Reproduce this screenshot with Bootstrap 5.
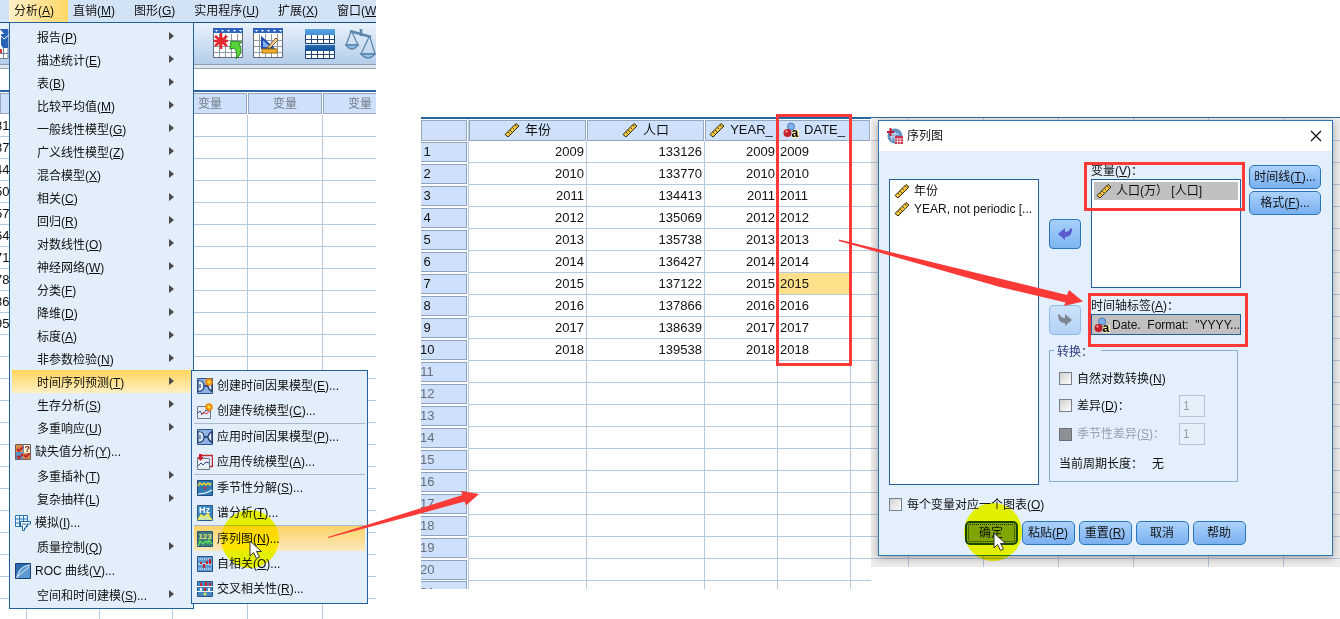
<!DOCTYPE html>
<html lang="zh-CN">
<head>
<meta charset="utf-8">
<meta name="viewport" content="width=device-width, initial-scale=1">
<title>序列图</title>
<link href="https://cdn.jsdelivr.net/npm/bootstrap@5.3.0/dist/css/bootstrap.min.css" rel="stylesheet">
<style>
  body { font: 12px/16px "Liberation Sans", "Noto Sans CJK SC", sans-serif; color: #111; background: #fff; }
  .stage { display: grid; grid-template-columns: 376fr 495fr 469fr; align-items: start; }
  .ico { width: 16px; height: 16px; flex: none; }
  a { color: inherit; text-decoration: none; }

  /* menu bar and toolbar */
  .menubar { background: #d3e3f6; border-bottom: 1px solid #1b4c84; height: 23px; padding-left: 9px; }
  .menubar .nav-link { color: #111; padding: 3px 14px 3px 5px; white-space: nowrap; }
  .menubar .nav-link.active { background: linear-gradient(90deg, #fff0c8, #ffd768); }
  .toolbar { height: 42px; background: linear-gradient(#e9f2fc, #b4cdea); border-bottom: 1px solid #8d9bab; padding: 5px 0 0 213px; gap: 9px; }
  .toolbar .btn { border: 0; padding: 0; line-height: 0; border-radius: 0; flex: none; }
  .toolbar svg { width: 31px; height: 31px; }
  .cut-icon { left: 0; top: 29px; width: 9px; height: 30px; }
  .editline { height: 27px; background: #fff; border-top: 3px solid #dde6f0; border-bottom: 2px solid #2a66a4; box-shadow: inset 0 1px #9aa5b1; }

  /* drop-down menus */
  .menu-panel { background: #e3eefb; border: 1px solid #22609e; border-radius: 0; padding: 2px; font-size: 12px; margin: 0; }
  .menu-main { left: 9px; top: 22px; width: 185px; min-width: 0; }
  .menu-sub { left: 100%; top: 0; width: 177px; min-width: 0; }
  .menu-panel .dropdown-item { display: flex; align-items: center; color: #111; height: 23px; padding: 2px 17px 0 25px; white-space: nowrap; }
  .menu-panel .dropdown-item.iconed { height: 25px; padding: 1px 3px 0; gap: 4px; }
  .menu-panel .hot { background: linear-gradient(#ffd55c, #fff0c4); }
  .menu-sub .hot { background: linear-gradient(#fdd368, #fbe9bc); }
  .menu-panel .more::after { content: ""; margin-left: auto; border-left: 5px solid #4a4a4a; border-top: 4px solid transparent; border-bottom: 4px solid transparent; margin-top: -4px; }
  .menu-panel .dropdown-divider { margin: 0; border-top: 1px solid #a9b9cb; opacity: 1; }

  /* data grids */
  .sheet { table-layout: fixed; border-collapse: separate; border-spacing: 0; font-size: 13px; line-height: 16px; margin: 0; }
  .sheet td { height: 22px; padding: 0 2px; border-right: 1px solid #b5c9e0; border-bottom: 1px solid #b5c9e0; text-align: right; }
  .sheet th { font-weight: 400; padding: 0; height: 22px; }
  .sheet .cap { height: 21px; display: flex; align-items: center; justify-content: center; gap: 5px; background: #cfe1fa; border: 1px solid #95a8c0; margin-right: 1px; white-space: nowrap; overflow: hidden; }
  .sheet .rowcap { height: 20px; background: #cfe1fa; border: 1px solid #8ca2bd; border-left: 0; margin: 0 1px 1px 0; overflow: hidden; }
  .sheet .rowcap span { display: block; width: 14px; margin-left: -1px; text-align: center; line-height: 18px; }
  .sheet .vacant { color: #666e78; }
  .left-sheet { width: 398px; }
  .left-sheet th { height: 23px; }
  .left-sheet .cap { color: #747c86; font-size: 12px; }
  .left-sheet td:first-child { text-align: left; padding-left: 0; }
  .left-sheet td:first-child span { margin-left: -5px; }
  .left-sheet tr:last-child td { height: 20px; border-bottom: 0; }
  .data-pane { padding: 117px 0 0 45px; }
  .data-sheet { width: 100%; border-top: 2px solid #2466a5; }
  .data-sheet th:first-child { border-right: 1px solid #b5c9e0; }
  .data-sheet td:last-child { border-right: 0; }
  .data-sheet .datecell { text-align: left; }
  .data-sheet .picked { background: #ffe08a; }
  .data-sheet tbody tr:last-child > * { height: 8px; border-bottom: 0; padding-top: 0; padding-bottom: 0; line-height: 0; }
  .data-sheet tbody tr:last-child .rowcap { height: 8px; border-bottom: 0; margin-bottom: 0; padding-top: 2px; }

  /* dialog */
  .backdrop-pane { margin-top: 117px; padding: 3px 7px 11px;
    background: linear-gradient(#35699c 0 1px, transparent 1px),
      repeating-linear-gradient(transparent 0 21px, #b3c3d8 21px 22px) 0 2px,
      repeating-linear-gradient(90deg, transparent 0 74px, #b3c3d8 74px 75px) -37px 0, #eeedec; }
  .dlg { background: #e3effc; border: 1px solid #2b77b5; box-shadow: 0 2px 8px rgba(0,0,0,.32); }
  .dlg-title { height: 30px; background: #fff; padding: 0 10px 0 8px; }
  .dlg-title .btn { padding: 0; border: 0; line-height: 0; }
  .dlg-body { padding: 12px 11px 10px 10px; }
  .columns { display: flex; gap: 10px; }
  .pickbox { background: #fff; border: 1px solid #22609e; border-radius: 0; overflow: hidden; }
  .pickbox .list-group-item { border: 0; background: none; color: #111; padding: 0 4px; height: 18px; display: flex; align-items: center; gap: 4px; white-space: nowrap; }
  .pickbox .chosen { background: #c0c0c0; }
  .source-list { margin-top: 16px; padding-top: 2px; flex: 1 1 150px; min-width: 0; }
  .targets { display: grid; grid-template-columns: 32px 150px 70px; column-gap: 10px; flex: none; }
  .targets .side { margin-left: -2px; width: 72px; display: flex; flex-direction: column; gap: 2px; padding-top: 2px; }
  .axis-field { padding-top: 10px; }
  .move-btn { width: 32px; height: 30px; padding: 0; border: 1px solid #2a76bd; border-radius: 4px; background: linear-gradient(#a7d0fb, #7db4f1); line-height: 0; }
  .move-btn:disabled { border-color: #8ebce8; background: linear-gradient(#cde2fa, #b3d2f6); opacity: 1; }
  .push { height: 24px; padding: 0; font-size: 12px; line-height: 16px; color: #111; border: 1px solid #2a76bd; border-radius: 5px; background: linear-gradient(#acd2fc, #79b0ef); white-space: nowrap; }
  .foot .push { width: 53px; }
  .foot .default { border: 2px solid #17446c; background: #7fa6d0; outline: 1px dotted #222; outline-offset: -4px; }
  .var-list { height: 109px; padding: 2px; }
  .var-list .list-group-item { padding: 0 2px; }
  .axis-box { height: 21px; }
  .axis-box .list-group-item { height: 19px; padding: 0 0 0 2px; gap: 2px; }
  .group { border: 1px solid #8aaccb; margin: 15px 3px 3px 0; height: 132px; grid-column: 1 / 3; position: relative; padding: 14px 9px 0; }
  .group legend { position: absolute; left: 4px; top: -7px; width: auto; padding: 0 8px 0 3px; margin: 0; background: #e3effc; font-size: 12px; line-height: 16px; color: #2c3c80; }
  .opt { display: flex; align-items: center; gap: 5px; height: 27px; }
  .opt.tall { height: 30px; }
  .opt.each { margin: 6px 0 3px; }
  .opt .form-check-input { width: 13px; height: 13px; margin: 0; border: 1px solid #76808c; border-radius: 0; background: linear-gradient(135deg, #cfcfcf, #fff); opacity: 1; flex: none; }
  .opt .form-check-input:disabled { background: #8d9196; border-color: #6b7075; }
  .opt .form-check-label, .opt .form-check-input:disabled ~ .form-check-label { opacity: 1; white-space: nowrap; }
  .opt.off { color: #98a0a9; }
  .opt .form-control { width: 26px; height: 22px; padding: 0 3px; margin: 0 23px 0 auto; border: 1px solid #bcc5ce; border-radius: 0; background: #e6f0fb; font-size: 12px; color: #98a0a9; }

  /* annotations laid over the windows */
  .notes { left: 0; top: 0; width: 100%; height: 619px; pointer-events: none; z-index: 1100; }
  .glow { mix-blend-mode: multiply; }
</style>
</head>
<body>
<svg class="position-absolute" width="0" height="0" aria-hidden="true">
  <linearGradient id="blueTop" x2="0" y2="1"><stop stop-color="#58a6e6"/><stop offset="1" stop-color="#14539b"/></linearGradient>
  <symbol id="ruler" viewBox="0 0 16 16"><path d="M1 12.500 12 1.500 15 4 4 15z" fill="#f2c53a" stroke="#2f2a18"/><path d="M4 10l1.500 1.500M6 8l2 2M8.500 5.500 10 7M11 3l1.500 1.500" stroke="#5a4610" stroke-width="1"/></symbol>
  <symbol id="nominal" viewBox="0 0 16 16"><circle cx="8" cy="4.500" r="3.500" fill="#7fb0ea" stroke="#4a78b8"/><circle cx="4.500" cy="11" r="4" fill="#c4202c"/><circle cx="3.500" cy="9.500" r="1.200" fill="#f08c8c"/><rect x="9" y="8" width="7" height="8" fill="#fff3b0"/><text x="8.500" y="15" font-family="Liberation Sans" font-size="12" font-weight="700">a</text></symbol>
  <symbol id="causal" viewBox="0 0 16 16"><path fill="#8fb2e4" stroke="#33558f" d="M.5.5h15v15H.5z"/><path d="M1 2.500q6 0 6 5.500t-6 5.500z" fill="#dce8f8" stroke="#26437c" stroke-width="1.200"/><path d="M7 8h4M15 2.500q-4 2.500-4 5.500t4 5.500z" fill="#dce8f8" stroke="#1b3268" stroke-width="1.300"/><path d="M3 6v4" stroke="#1b3268"/></symbol>
  <symbol id="sun" viewBox="0 0 8 8"><circle cx="4" cy="4" r="3.800" fill="#f28a0c"/><circle cx="4" cy="4" r="1.800" fill="#ffd83b"/></symbol>
  <symbol id="trend" viewBox="0 0 16 16"><path fill="#e8eef6" stroke="#6a7888" d="M.5 3.500h13v12H.5z"/><path d="M1 10l2-2 2 3 2-1 2-3 2 1 2-3" fill="none" stroke="#2e448f"/><path d="M4 12l3-3 2 2 4-3" fill="none" stroke="#d32a35"/></symbol>
  <symbol id="apply" viewBox="0 0 16 16"><path d="M4 1.500h11.500v11H13" fill="none" stroke="#c02a35" stroke-width="1.500"/><path fill="#e8eef6" stroke="#6a7888" d="M.5 4.500h12v11H.5z"/><path d="M1 12l3-3 2 2 3-3 3 1" fill="none" stroke="#2e448f"/><path d="M0 3h7L3.500 7zM2 0h3v3H2z" fill="#c8202e"/></symbol>
  <symbol id="season" viewBox="0 0 16 16"><path fill="#2f7bb4" stroke="#204a7c" d="M.5.5h15v15H.5z"/><path d="M1 6l2-3 2 2 2-2 2 2 2-2 2 2 1-2" fill="none" stroke="#e3d23c" stroke-width="1.500"/><path d="M6 7h4L8 10z" fill="#d02a30"/><path d="M1 14c5 0 9-1 14-4" stroke="#fff" stroke-width="1.200" fill="none"/></symbol>
  <symbol id="hertz" viewBox="0 0 16 16"><path fill="#3c88be" stroke="#28588c" d="M.5.5h15v15H.5z"/><text x="2" y="8" font-family="Liberation Sans" font-size="9" font-weight="700" fill="#fff">Hz</text><path d="M1 15l3-5 3 2 4-3 2 4 2 2" fill="#c9e7b4" stroke="#f4ec40" stroke-width="1.500"/></symbol>
  <symbol id="sequence" viewBox="0 0 16 16"><path fill="#3b7c79" stroke="#2a5480" d="M.5.5h15v15H.5z"/><text x="1.500" y="7.500" font-family="Liberation Sans" font-size="8" font-weight="700" fill="#e8e77a">123</text><path d="M1 15l2-5 3 3 3-3 2 2 1-3 3 4" fill="none" stroke="#5bdc56" stroke-width="1.500"/></symbol>
  <symbol id="auto" viewBox="0 0 16 16"><path fill="#5b9bd0" stroke="#28558c" d="M.5.5h15v15H.5z"/><path d="M1 8h14" stroke="#fff"/><path d="M1 3h14M1 13h14" stroke="#fff" stroke-dasharray="1 1"/><path d="M3 6h2v2H3zM6 8h2v4H6zM9 5h2v3H9zM12 3h2v5h-2z" fill="#c3202c"/></symbol>
  <symbol id="cross" viewBox="0 0 16 16"><path fill="#3f86c2" stroke="#28558c" d="M.5.5h15v15H.5z"/><path d="M0 5.500h16M0 10.500h16" stroke="#fff"/><path d="M3 2h2v3H3zM8 1h2v4H8zM12 2h2v3h-2z" fill="#d02430"/><path d="M3 7h2v3H3zM11 7h2v3h-2z" fill="#e8f2fb"/><path d="M7 7h2v3H7z" fill="#d02430"/><circle cx="8" cy="13" r="1.500" fill="#e6e548"/></symbol>
  <symbol id="missing" viewBox="0 0 16 16"><path fill="#5b94c8" stroke="#7a5b60" d="M.5.5h15v15H.5z"/><path fill="#dc8a4a" d="M1 1h7v7H1zM8 9h7v6H8z"/><path d="M2 5l2 2 4-4M2 12l2 2 4-4M9 11l2 2 4-4" fill="none" stroke="#b8262c" stroke-width="1.800"/><path fill="#fffbd0" d="M9 1h6v8H9z"/><text x="9.500" y="8" font-family="Liberation Sans" font-size="9" font-weight="700" fill="#701020">?</text></symbol>
  <symbol id="simul" viewBox="0 0 16 16"><path fill="#e9f4fd" stroke="#2b78b8" d="M.5.500h12v11H.5zM.5 4h12M.5 8h12M4.500 0v11M8.500 0v11"/><path fill="#fff" stroke="#1f63a4" d="M5.500 6.500h10V9H12v2h-1v2H9.500v2.500h-2V11h-2z"/><path d="M7 9h4" stroke="#1f63a4"/></symbol>
  <symbol id="roc" viewBox="0 0 16 16"><path fill="#2d6cae" stroke="#1d3e70" d="M.5.5h15v15H.5z"/><path d="M1 15C2 7 6 2.500 15 2v13z" fill="#5a9ad0"/><path d="M2 15C3 8 7 3 15 2M2 14 14 4" stroke="#e8f2fc" fill="none"/></symbol>
  <symbol id="gridbase" viewBox="0 0 30 30"><path fill="#fff" d="M1 1h28v28H1z"/><path d="M1 12.500h28M1 18.500h28M1 24.500h28M6.500 6v23M12.500 6v23M18.500 6v23M24.500 6v23" stroke="#9099a6"/><path d="M.5.5h29v29H.5z" fill="none" stroke="#606c7c"/><path fill="#2f63c0" d="M0 0h30v5H0z"/><path d="M2 2h3l-1.500 2zM8 2h3L9.500 4zM14 2h3l-1.500 2zM20 2h3l-1.500 2zM26 2h3l-1.500 2z" fill="#fff"/></symbol>
</svg>

<main class="stage position-relative">
  <section class="position-relative overflow-hidden" aria-label="数据编辑器">
    <nav class="menubar nav flex-nowrap">
      <a class="nav-link active" href="#">分析(<u>A</u>)</a>
      <a class="nav-link" href="#">直销(<u>M</u>)</a>
      <a class="nav-link" href="#">图形(<u>G</u>)</a>
      <a class="nav-link" href="#">实用程序(<u>U</u>)</a>
      <a class="nav-link" href="#">扩展(<u>X</u>)</a>
      <a class="nav-link" href="#">窗口(<u>W</u>)</a>
    </nav>
    <div class="toolbar d-flex align-items-start">
      <button class="btn" type="button" aria-label="插入个案"><svg viewBox="0 0 31 31"><use href="#gridbase" width="30" height="30"/><path d="M8 5v16M2 8l12 10M14 8 2 18M1 13h14" stroke="#e8242c" stroke-width="2.600"/><path d="M17 21l1-8 11 1-3 2c3 5 3 10-3 15 1-4 1-8-2-11z" fill="#58d33a" stroke="#22861c"/></svg></button>
      <button class="btn me-2" type="button" aria-label="插入变量"><svg viewBox="0 0 31 31"><use href="#gridbase" width="30" height="30"/><path d="M9 10v10h11z" fill="#7fb2ee" stroke="#1c4fae" stroke-width="2"/><path d="M14 20 23 10l2 2-8 8z" fill="#f1d79a" stroke="#8b5a1c"/><path d="M9 21h15v4H9z" fill="#f2b02c" stroke="#a66b0c"/></svg></button>
      <button class="btn ms-1" type="button" aria-label="拆分文件"><svg viewBox="0 0 31 31"><path fill="#fff" stroke="#173e70" d="M.5 1.500h29v14H.5zM.5 17.500h29v13H.5z"/><path fill="url(#blueTop)" d="M0 1h30v6H0zM0 17h30v6H0z"/><path d="M1 11.500h28M1 26.500h28M6.500 7v8M12.500 7v8M18.500 7v8M24.500 7v8M6.500 23v7M12.500 23v7M18.500 23v7M24.500 23v7" stroke="#2b4a76"/></svg></button>
      <button class="btn" type="button" aria-label="加权个案"><svg viewBox="0 0 31 31" fill="none" stroke="#5e86ab" stroke-width="1.300"><path d="M5 3 26 9M16 1v7" stroke-width="2.600"/><path d="M6 4 1 17h12L7 4M24 9l-8 17h14L25 9"/><path d="M1 17q6 8 12 0zM16 26q7 8 14 0z" fill="#8fc0ea"/></svg></button>
    </div>
    <svg class="cut-icon position-absolute" viewBox="0 0 9 30" aria-hidden="true"><path fill="#fff" stroke="#718096" d="M-1 .5h9v29h-9zM3.500 18v12M-1 24.500h9"/><path fill="#2a62b8" d="M0 0h8v19H3L1 16V5h3z"/><path d="M1 7l3 3 5-4" stroke="#fff" fill="none"/><path d="M0 20h2v4H0z" fill="#d83a3a"/></svg>
    <div class="editline"></div>
    <table class="sheet left-sheet">
      <colgroup><col style="width:27px"><col style="width:73px"><col style="width:73px"><col style="width:75px"><col style="width:75px"><col style="width:75px"></colgroup>
      <thead><tr><th><div class="cap"></div></th><th><div class="cap"></div></th><th><div class="cap"></div></th><th><div class="cap">变量</div></th><th><div class="cap">变量</div></th><th><div class="cap">变量</div></th></tr></thead>
      <tbody id="leftRows"></tbody>
    </table>

    <ul class="dropdown-menu menu-panel menu-main show">
      <li><a class="dropdown-item more" href="#"><span>报告(<u>P</u>)</span></a></li>
      <li><a class="dropdown-item more" href="#"><span>描述统计(<u>E</u>)</span></a></li>
      <li><a class="dropdown-item more" href="#"><span>表(<u>B</u>)</span></a></li>
      <li><a class="dropdown-item more" href="#"><span>比较平均值(<u>M</u>)</span></a></li>
      <li><a class="dropdown-item more" href="#"><span>一般线性模型(<u>G</u>)</span></a></li>
      <li><a class="dropdown-item more" href="#"><span>广义线性模型(<u>Z</u>)</span></a></li>
      <li><a class="dropdown-item more" href="#"><span>混合模型(<u>X</u>)</span></a></li>
      <li><a class="dropdown-item more" href="#"><span>相关(<u>C</u>)</span></a></li>
      <li><a class="dropdown-item more" href="#"><span>回归(<u>R</u>)</span></a></li>
      <li><a class="dropdown-item more" href="#"><span>对数线性(<u>O</u>)</span></a></li>
      <li><a class="dropdown-item more" href="#"><span>神经网络(<u>W</u>)</span></a></li>
      <li><a class="dropdown-item more" href="#"><span>分类(<u>F</u>)</span></a></li>
      <li><a class="dropdown-item more" href="#"><span>降维(<u>D</u>)</span></a></li>
      <li><a class="dropdown-item more" href="#"><span>标度(<u>A</u>)</span></a></li>
      <li><a class="dropdown-item more" href="#"><span>非参数检验(<u>N</u>)</span></a></li>
      <li class="dropend">
        <a class="dropdown-item more hot" href="#"><span>时间序列预测(<u>T</u>)</span></a>
        <ul class="dropdown-menu menu-panel menu-sub show">
          <li><a class="dropdown-item iconed" href="#"><svg class="ico"><use href="#causal"/><use href="#sun" x="8" width="8" height="8"/></svg><span>创建时间因果模型(<u>E</u>)...</span></a></li>
          <li><a class="dropdown-item iconed" href="#"><svg class="ico"><use href="#trend"/><use href="#sun" x="8" width="8" height="8"/></svg><span>创建传统模型(<u>C</u>)...</span></a></li>
          <li><hr class="dropdown-divider"></li>
          <li><a class="dropdown-item iconed" href="#"><svg class="ico"><use href="#causal"/></svg><span>应用时间因果模型(<u>P</u>)...</span></a></li>
          <li><a class="dropdown-item iconed" href="#"><svg class="ico"><use href="#apply"/></svg><span>应用传统模型(<u>A</u>)...</span></a></li>
          <li><hr class="dropdown-divider"></li>
          <li><a class="dropdown-item iconed" href="#"><svg class="ico"><use href="#season"/></svg><span>季节性分解(<u>S</u>)...</span></a></li>
          <li><a class="dropdown-item iconed" href="#"><svg class="ico"><use href="#hertz"/></svg><span>谱分析(<u>T</u>)...</span></a></li>
          <li><hr class="dropdown-divider"></li>
          <li><a class="dropdown-item iconed hot" href="#"><svg class="ico"><use href="#sequence"/></svg><span>序列图(<u>N</u>)...</span></a></li>
          <li><a class="dropdown-item iconed" href="#"><svg class="ico"><use href="#auto"/></svg><span>自相关(<u>O</u>)...</span></a></li>
          <li><a class="dropdown-item iconed" href="#"><svg class="ico"><use href="#cross"/></svg><span>交叉相关性(<u>R</u>)...</span></a></li>
        </ul>
      </li>
      <li><a class="dropdown-item more" href="#"><span>生存分析(<u>S</u>)</span></a></li>
      <li><a class="dropdown-item more" href="#"><span>多重响应(<u>U</u>)</span></a></li>
      <li><a class="dropdown-item iconed" href="#"><svg class="ico"><use href="#missing"/></svg><span>缺失值分析(<u>Y</u>)...</span></a></li>
      <li><a class="dropdown-item more" href="#"><span>多重插补(<u>T</u>)</span></a></li>
      <li><a class="dropdown-item more" href="#"><span>复杂抽样(<u>L</u>)</span></a></li>
      <li><a class="dropdown-item iconed" href="#"><svg class="ico"><use href="#simul"/></svg><span>模拟(<u>I</u>)...</span></a></li>
      <li><a class="dropdown-item more" href="#"><span>质量控制(<u>Q</u>)</span></a></li>
      <li><a class="dropdown-item iconed" href="#"><svg class="ico"><use href="#roc"/></svg><span>ROC 曲线(<u>V</u>)...</span></a></li>
      <li><a class="dropdown-item more" href="#"><span>空间和时间建模(<u>S</u>)...</span></a></li>
    </ul>
  </section>

  <section class="data-pane" aria-label="数据视图">
    <table class="sheet data-sheet">
      <colgroup><col style="width:48px"><col style="width:118px"><col style="width:118px"><col style="width:73px"><col style="width:73px"><col></colgroup>
      <thead><tr>
        <th><div class="cap"></div></th>
        <th><div class="cap"><svg class="ico"><use href="#ruler"/></svg>年份</div></th>
        <th><div class="cap"><svg class="ico"><use href="#ruler"/></svg>人口</div></th>
        <th><div class="cap"><svg class="ico"><use href="#ruler"/></svg>YEAR_</div></th>
        <th><div class="cap"><svg class="ico"><use href="#nominal"/></svg>DATE_</div></th>
        <th><div class="cap"></div></th>
      </tr></thead>
      <tbody id="dataRows"></tbody>
    </table>
  </section>

  <section class="backdrop-pane">
    <div class="dlg" role="dialog" aria-labelledby="dlgTitle">
      <div class="dlg-title d-flex align-items-center">
        <svg class="ico me-1" viewBox="0 0 16 16"><circle cx="8" cy="8" r="7.500" fill="#5d8fc0"/><path d="M3 6h9M3 9h9M5 4v9M8 4v9" stroke="#dce9f6"/><path d="M0 4h7M3.500 0v8" stroke="#c01c38" stroke-width="2"/><path fill="#c8324a" d="M8 8h8v8H8z"/><path d="M8 11h8M8 13.500h8M10.500 10v6M13 10v6" stroke="#fff" stroke-width=".7"/></svg>
        <span id="dlgTitle">序列图</span>
        <button class="btn ms-auto" type="button" aria-label="关闭"><svg width="12" height="12" viewBox="0 0 12 12"><path d="M1 1l10 10M11 1 1 11" stroke="#111" stroke-width="1.200"/></svg></button>
      </div>
      <div class="dlg-body">
        <div class="columns">
          <div class="list-group pickbox source-list">
            <a class="list-group-item" href="#"><svg class="ico"><use href="#ruler"/></svg><span>年份</span></a>
            <a class="list-group-item" href="#"><svg class="ico"><use href="#ruler"/></svg><span>YEAR, not periodic [...</span></a>
          </div>
          <div class="targets">
            <div class="d-flex align-items-center pt-3"><button class="btn move-btn" type="button" aria-label="移出"><svg width="16" height="14" viewBox="0 0 16 14"><path d="M1 7 8 1v4c3 0 4-1 5-3l2-1c0 6-2 9-7 9v3z" fill="#5b5bd0"/></svg></button></div>
            <div>
              <div id="varLabel">变量(<u>V</u>)：</div>
              <div class="list-group pickbox var-list" aria-labelledby="varLabel">
                <a class="list-group-item chosen" href="#"><svg class="ico"><use href="#ruler"/></svg><span>人口(万） [人口]</span></a>
              </div>
            </div>
            <div class="side">
              <button class="btn push" type="button">时间线(<u>T</u>)...</button>
              <button class="btn push" type="button">格式(<u>F</u>)...</button>
            </div>
            <div class="d-flex align-items-end"><button class="btn move-btn" type="button" disabled aria-label="移入"><svg width="16" height="14" viewBox="0 0 16 14"><path d="M15 7 8 1v4C5 5 4 4 3 2L1 1c0 6 2 9 7 9v3z" fill="#7e8791"/></svg></button></div>
            <div class="axis-field">
              <div id="axisLabel">时间轴标签(<u>A</u>)：</div>
              <div class="list-group pickbox axis-box" aria-labelledby="axisLabel">
                <a class="list-group-item chosen" href="#"><svg class="ico"><use href="#nominal"/></svg><span>Date.&nbsp; Format:&nbsp; "YYYY...</span></a>
              </div>
            </div>
            <div></div>
            <fieldset class="group">
              <legend>转换：</legend>
              <div class="opt"><input class="form-check-input" type="checkbox" id="logOpt"><label class="form-check-label" for="logOpt">自然对数转换(<u>N</u>)</label></div>
              <div class="opt"><input class="form-check-input" type="checkbox" id="diffOpt"><label class="form-check-label" for="diffOpt">差异(<u>D</u>)：</label><input class="form-control" type="text" value="1" disabled aria-label="差异"></div>
              <div class="opt tall off"><input class="form-check-input" type="checkbox" id="seasonOpt" disabled><label class="form-check-label" for="seasonOpt">季节性差异(<u>S</u>)：</label><input class="form-control" type="text" value="1" disabled aria-label="季节性差异"></div>
              <div class="opt tall"><span>当前周期长度：</span><span class="ms-1">无</span></div>
            </fieldset>
          </div>
        </div>
        <div class="opt each"><input class="form-check-input" type="checkbox" id="eachOpt"><label class="form-check-label" for="eachOpt">每个变量对应一个图表(<u>O</u>)</label></div>
        <div class="foot d-flex justify-content-center gap-1">
          <button class="btn push default" type="button">确定</button>
          <button class="btn push" type="button">粘贴(<u>P</u>)</button>
          <button class="btn push" type="button">重置(<u>R</u>)</button>
          <button class="btn push" type="button">取消</button>
          <button class="btn push" type="button">帮助</button>
        </div>
      </div>
    </div>
  </section>

  <svg class="notes glow position-absolute" viewBox="0 0 1340 619" preserveAspectRatio="none" aria-hidden="true">
    <circle cx="250" cy="539" r="29" fill="#ff0"/><circle cx="993" cy="532" r="29" fill="#ff0"/>
  </svg>
  <svg class="notes position-absolute" viewBox="0 0 1340 619" preserveAspectRatio="none" aria-hidden="true">
    <g fill="#fb3a38">
      <path d="M328 537 415 510 462.500 495 461 491 479 494 466 505.500 464.500 501.500 415 515 328 538z"/>
      <path d="M839 239.500 1067 295 1069 290 1083 301.500 1064 306 1065.500 302.500 1000 287 839 241z"/>
    </g>
    <g fill="none" stroke="#fb3a38" stroke-width="3">
      <path d="M777.500 115.500h73v249h-73zM1085.500 163.500h158v46h-158zM1089.500 294.500h157v51h-157z"/>
    </g>
    <g fill="#fff" stroke="#333">
      <path id="pointer" d="M250 541v15l3.500-3.500 3 6 3-1.500-3-5.500h5z"/>
      <use href="#pointer" x="744" y="-8"/>
    </g>
  </svg>
</main>

<script>
  const population = [133126, 133770, 134413, 135069, 135738, 136427, 137122, 137866, 138639, 139538];
  const tails = ['31', '37', '44', '50', '57', '64', '71', '78', '36', '95'];
  const leftRows = document.getElementById('leftRows');
  for (let i = 0; i < 23; i++) {
    leftRows.insertAdjacentHTML('beforeend', `<tr><td><span>${tails[i] || ''}</span></td>${'<td></td>'.repeat(5)}</tr>`);
  }
  const dataRows = document.getElementById('dataRows');
  for (let i = 0; i < 21; i++) {
    const people = population[i] || '';
    const year = people && 2009 + i;
    dataRows.insertAdjacentHTML('beforeend', `<tr><th scope="row" class="${people ? '' : 'vacant'}"><div class="rowcap"><span>${i + 1}</span></div></th>
      <td>${year}</td><td>${people}</td><td>${year}</td><td class="datecell ${year === 2015 ? 'picked' : ''}">${year}</td><td></td></tr>`);
  }
</script>
<script src="https://cdn.jsdelivr.net/npm/bootstrap@5.3.0/dist/js/bootstrap.bundle.min.js"></script>
</body>
</html>
